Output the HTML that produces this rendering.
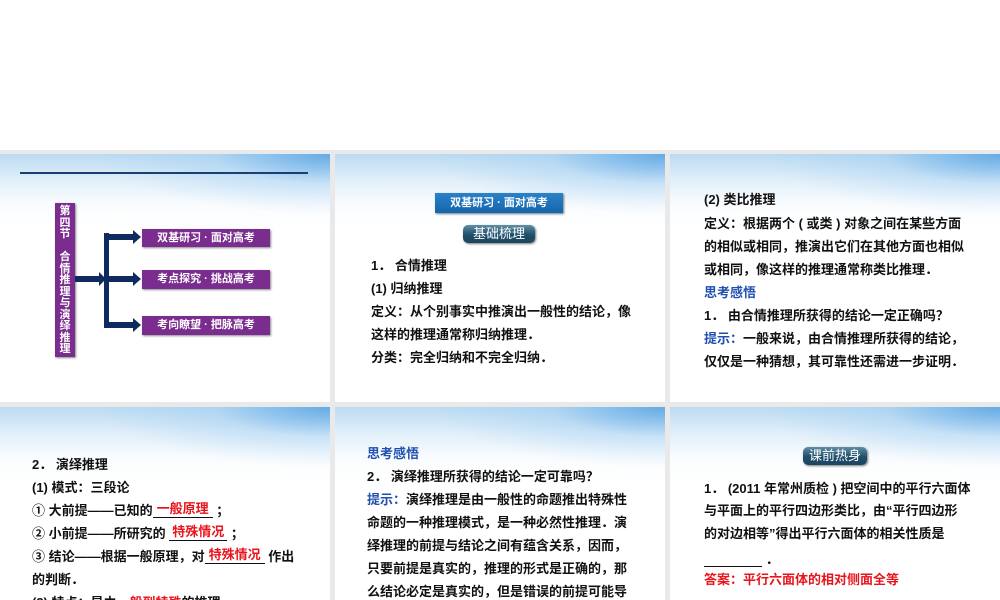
<!DOCTYPE html>
<html><head><meta charset="utf-8"><style>
*{margin:0;padding:0;box-sizing:border-box}
body{width:1000px;height:600px;overflow:hidden;background:#fff;position:relative;font-family:"Liberation Serif","Noto Serif CJK SC",serif}
.gray{position:absolute;left:0;top:150px;width:1000px;height:450px;background:#e9e9e9}
.s{position:absolute;background:#fff;overflow:hidden}
.s .hd{position:absolute;left:0;top:0;width:100%;height:75px;background:linear-gradient(180deg,rgba(175,212,240,.85) 0%,rgba(205,228,246,.6) 35%,rgba(236,245,252,.35) 65%,rgba(255,255,255,0) 100%)}
.s .hd2{position:absolute;right:0;top:0;width:100%;height:80px;background:radial-gradient(ellipse 70% 60px at 100% 0,rgba(70,155,225,.75) 0%,rgba(150,200,240,.35) 50%,rgba(255,255,255,0) 100%)}
.t{position:absolute;font-size:13px;font-weight:bold;color:#111;white-space:nowrap;line-height:16px;font-family:"Liberation Sans","Noto Sans CJK SC",sans-serif}
.b{color:#1f4fb0}.r{color:#e8141c}
.pb{position:absolute;background:#7b2d8f;color:#fff;font-size:11px;font-weight:bold;font-family:"Liberation Sans","Noto Sans CJK SC",sans-serif;text-align:center;line-height:18px;box-shadow:1px 1px 2px #888}
.pill{position:absolute;border-radius:5px;background:linear-gradient(180deg,#5f8fa5,#1f4f6a 55%,#1a4560);color:#fff;font-size:13px;font-family:"Liberation Sans","Noto Sans CJK SC",sans-serif;text-align:center;line-height:18px;box-shadow:1px 1px 2px #777}
.ul{display:inline-block;border-bottom:1px solid #111;position:relative;text-align:center;line-height:11px;vertical-align:top;height:15px}
</style></head><body>
<div class="gray"></div>

<div class="s" style="left:0;top:154px;width:330px;height:248px"><div class="hd"></div><div class="hd2"></div>
<div style="position:absolute;left:20px;top:18px;width:288px;height:2px;background:#1a3f72"></div>
<div class="pb" style="left:55px;top:49px;width:20px;height:154px;font-size:11px;line-height:11.5px;padding-top:3px">第<br>四<br>节<br><br>合<br>情<br>推<br>理<br>与<br>演<br>绎<br>推<br>理</div>
<svg style="position:absolute;left:0;top:0" width="330" height="248">
<g fill="#0f2a5e"><rect x="75" y="122" width="25" height="6"/><polygon points="99,118 106,125 99,132"/>
<rect x="104" y="79" width="5" height="95"/>
<rect x="104" y="80" width="30" height="6"/><polygon points="133,76 141,83 133,90"/>
<rect x="104" y="122" width="30" height="6"/><polygon points="133,118 141,125 133,132"/>
<rect x="104" y="168" width="30" height="6"/><polygon points="133,164 141,171 133,178"/></g></svg>
<div class="pb" style="left:142px;top:75px;width:128px;height:18px">双基研习 · 面对高考</div>
<div class="pb" style="left:142px;top:116px;width:128px;height:19px">考点探究 · 挑战高考</div>
<div class="pb" style="left:142px;top:162px;width:128px;height:19px">考向瞭望 · 把脉高考</div>
</div>

<div class="s" style="left:335px;top:154px;width:330px;height:248px"><div class="hd"></div><div class="hd2"></div>
<div style="position:absolute;left:100px;top:39px;width:128px;height:20px;background:linear-gradient(180deg,#2a82c8,#1565ac);color:#fff;font-size:11px;font-weight:bold;text-align:center;line-height:20px;font-family:'Liberation Sans','Noto Sans CJK SC',sans-serif;box-shadow:1px 1px 2px #777">双基研习 · 面对高考</div>
<div class="pill" style="left:128px;top:71px;width:72px;height:18px">基础梳理</div>
<div class="t" style="left:36px;top:104px">1． 合情推理</div>
<div class="t" style="left:36px;top:127px">(1) 归纳推理</div>
<div class="t" style="left:36px;top:150px">定义：从个别事实中推演出一般性的结论，像</div>
<div class="t" style="left:36px;top:173px">这样的推理通常称归纳推理．</div>
<div class="t" style="left:36px;top:196px">分类：完全归纳和不完全归纳．</div>
</div>

<div class="s" style="left:670px;top:154px;width:330px;height:248px"><div class="hd"></div><div class="hd2"></div>
<div class="t" style="left:34px;top:38px">(2) 类比推理</div>
<div class="t" style="left:34px;top:62px">定义：根据两个 ( 或类 ) 对象之间在某些方面</div>
<div class="t" style="left:34px;top:85px">的相似或相同，推演出它们在其他方面也相似</div>
<div class="t" style="left:34px;top:108px">或相同，像这样的推理通常称类比推理．</div>
<div class="t b" style="left:34px;top:131px">思考感悟</div>
<div class="t" style="left:34px;top:154px">1． 由合情推理所获得的结论一定正确吗？</div>
<div class="t" style="left:34px;top:177px"><span class="b">提示：</span>一般来说，由合情推理所获得的结论，</div>
<div class="t" style="left:34px;top:200px">仅仅是一种猜想，其可靠性还需进一步证明．</div>
</div>

<div class="s" style="left:0;top:407px;width:330px;height:193px"><div class="hd"></div><div class="hd2"></div>
<div class="t" style="left:32px;top:50px">2． 演绎推理</div>
<div class="t" style="left:32px;top:73px">(1) 模式：三段论</div>
<div class="t" style="left:32px;top:96px">① 大前提——已知的<span class="ul r" style="width:60px">一般原理</span> ；</div>
<div class="t" style="left:32px;top:119px">② 小前提——所研究的 <span class="ul r" style="width:58px">特殊情况</span> ；</div>
<div class="t" style="left:32px;top:142px">③ 结论——根据一般原理，对<span class="ul r" style="width:60px">特殊情况</span> 作出</div>
<div class="t" style="left:32px;top:165px">的判断．</div>
<div class="t" style="left:32px;top:188px">(2) 特点：是由<span class="r">一般到特殊</span>的推理．</div>
</div>

<div class="s" style="left:335px;top:407px;width:330px;height:193px"><div class="hd"></div><div class="hd2"></div>
<div class="t b" style="left:32px;top:39px">思考感悟</div>
<div class="t" style="left:32px;top:62px">2． 演绎推理所获得的结论一定可靠吗？</div>
<div class="t" style="left:32px;top:85px"><span class="b">提示：</span>演绎推理是由一般性的命题推出特殊性</div>
<div class="t" style="left:32px;top:108px">命题的一种推理模式，是一种必然性推理．演</div>
<div class="t" style="left:32px;top:131px">绎推理的前提与结论之间有蕴含关系，因而，</div>
<div class="t" style="left:32px;top:154px">只要前提是真实的，推理的形式是正确的，那</div>
<div class="t" style="left:32px;top:177px">么结论必定是真实的，但是错误的前提可能导</div>
</div>

<div class="s" style="left:670px;top:407px;width:330px;height:193px"><div class="hd"></div><div class="hd2"></div>
<div class="pill" style="left:133px;top:40px;width:64px;height:18px">课前热身</div>
<div class="t" style="left:34px;top:74px">1． (2011 年常州质检 ) 把空间中的平行六面体</div>
<div class="t" style="left:34px;top:96px">与平面上的平行四边形类比，由“平行四边形</div>
<div class="t" style="left:34px;top:119px">的对边相等”得出平行六面体的相关性质是</div>
<div class="t" style="left:34px;top:145px"><span class="ul" style="width:58px">&nbsp;</span> ．</div>
<div class="t r" style="left:34px;top:165px">答案：平行六面体的相对侧面全等</div>
</div>
</body></html>
